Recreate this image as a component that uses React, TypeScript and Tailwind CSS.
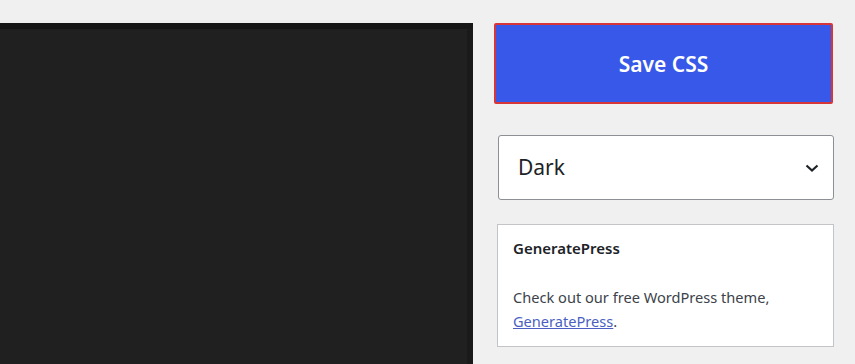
const App = () => {
  return (
    <div className="w-[855px] h-[364px] bg-[#f0f0f0] overflow-hidden flex" style={{ fontFamily: '"Noto Sans", "Open Sans", sans-serif' }}>
      {/* editor area */}
      <div className="w-[473px] mt-[23px] h-[341px] bg-[#161616] flex flex-col">
        <div className="h-[6px] shrink-0" />
        <div className="flex-1 flex">
          <div className="flex-1 bg-[#202020]" />
          <div className="w-[6px] bg-[#1a1a1a]" />
        </div>
      </div>

      {/* sidebar */}
      <div className="ml-[24px] w-[337px] flex flex-col">
        <button className="mt-[23px] -ml-[3px] w-[339px] h-[81px] bg-[#3858e9] border-2 border-[#d63638] rounded-[2px] text-white text-[21px] font-semibold pt-[3px]">
          Save CSS
        </button>

        <div className="mt-[31px] ml-[1px] h-[65px] bg-white border border-[#8c8f94] rounded-[3px] flex items-center justify-between pl-[19px] pr-[14px]">
          <span className="text-[21px] text-[#1d2327]">Dark</span>
          <svg width="14" height="10" viewBox="0 0 14 10" fill="none" stroke="#1d2327" strokeWidth="2.2">
            <path d="M1.5 2.5l5.5 5 5.5-5" />
          </svg>
        </div>

        <div className="mt-[24px] h-[123px] w-[337px] bg-white border border-[#c3c4c7] px-[15px] pt-[11px]">
          <div className="text-[15px] font-semibold text-[#1d2327] leading-[24px]">GeneratePress</div>
          <p className="mt-[25px] text-[14.6px] text-[#3c434a] leading-[24px]">
            Check out our free WordPress theme,{' '}
            <a href="#" className="text-[#4a5fc1] underline">GeneratePress</a>.
          </p>
        </div>
      </div>
    </div>
  );
};

export default App;
